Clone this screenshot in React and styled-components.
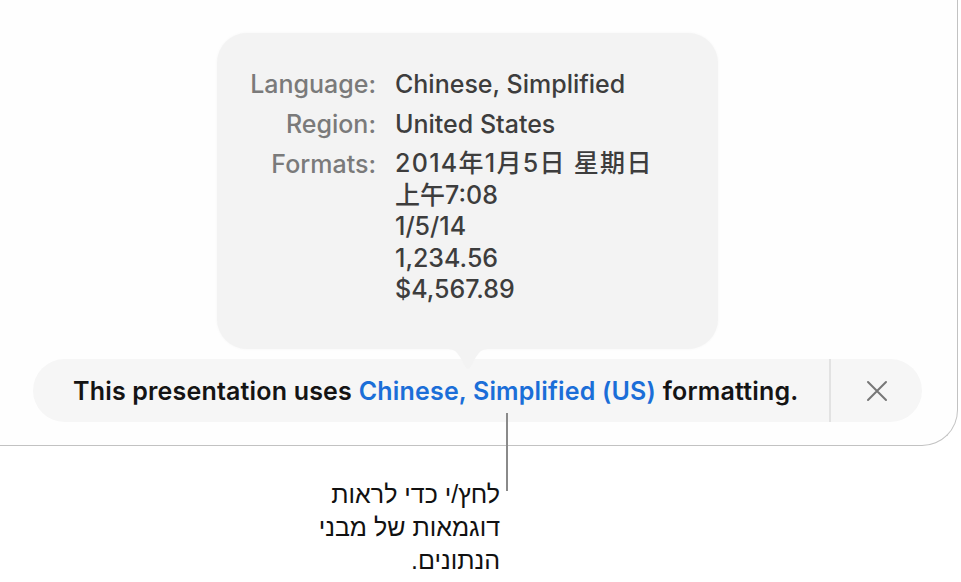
import React from "react";
import styled, { createGlobalStyle } from "styled-components";

const Global = createGlobalStyle`
  html, body { margin: 0; padding: 0; background: #ffffff; }
  body { font-family: Inter, "Noto Sans CJK SC", sans-serif; -webkit-font-smoothing: antialiased; }
  #root { width: 961px; height: 582px; overflow: hidden; }
`;

const Page = styled.div`
  position: relative;
  width: 961px;
  height: 582px;
  background: #ffffff;
`;

const Window = styled.div`
  box-sizing: border-box;
  width: 958px;
  height: 446px;
  background: #fefefe;
  border-right: 1.5px solid #c2c2c2;
  border-bottom: 1.5px solid #c2c2c2;
  border-bottom-right-radius: 36px;
  padding-top: 33px;
  display: flex;
  flex-direction: column;
`;

const Popover = styled.div`
  position: relative;
  box-sizing: border-box;
  margin-left: 217px;
  width: 501px;
  height: 316px;
  padding-top: 35px;
  background: #f3f3f3;
  border-radius: 30px;
  box-shadow: 0 0 3px rgba(0, 0, 0, 0.04);
`;

const Arrow = styled.div`
  position: absolute;
  left: 50%;
  bottom: -22px;
  width: 44px;
  height: 22px;
  transform: translateX(-50%);
  svg { display: block; }
`;

const InfoGrid = styled.div`
  display: grid;
  grid-template-columns: 159px 1fr;
  column-gap: 19px;
  row-gap: 8px;
  font-size: 25px;
  line-height: 32px;
`;

const Label = styled.div`
  text-align: right;
  color: #7a7a7a;
  font-weight: 500;
`;

const Value = styled.div`
  color: #3d3d3d;
  font-weight: 500;
  white-space: nowrap;
`;

const Line = styled.div`
  line-height: 31.5px;
  letter-spacing: ${(p) => (p.$wide ? "1.3px" : "0")};
`;

const Bar = styled.div`
  box-sizing: border-box;
  margin-top: 10px;
  margin-left: 33px;
  width: 889px;
  height: 63px;
  border-radius: 32px;
  background: #f6f6f6;
  display: flex;
  align-items: stretch;
`;

const Message = styled.div`
  flex: 1;
  display: flex;
  align-items: center;
  padding-left: 40px;
  font-size: 25px;
  font-weight: 600;
  letter-spacing: 0.18px;
  color: #141414;
  white-space: nowrap;
`;

const Link = styled.span`
  color: #1b6ed8;
  margin: 0 0.27em;
`;

const Divider = styled.div`
  width: 2px;
  background: #e2e2e2;
`;

const Close = styled.button`
  width: 91px;
  border: none;
  background: transparent;
  padding: 0;
  display: flex;
  align-items: center;
  justify-content: center;
  svg { display: block; }
`;

const Callout = styled.div`
  position: absolute;
  left: 506px;
  top: 413px;
  width: 2px;
  height: 78px;
  background: #8a8a8a;
`;

const Note = styled.div`
  position: absolute;
  right: 461px;
  top: 478px;
  direction: rtl;
  text-align: right;
  font-family: "Liberation Sans", "DejaVu Sans", sans-serif;
  font-size: 25px;
  line-height: 33px;
  color: #111;
  width: 240px;
`;

export default function App() {
  return (
    <Page>
      <Global />
      <Window>
        <Popover>
          <InfoGrid>
            <Label>Language:</Label>
            <Value>Chinese, Simplified</Value>
            <Label>Region:</Label>
            <Value>United States</Value>
            <Label>Formats:</Label>
            <Value>
              <Line $wide>2014年1月5日 星期日</Line>
              <Line>上午7:08</Line>
              <Line>1/5/14</Line>
              <Line>1,234.56</Line>
              <Line>$4,567.89</Line>
            </Value>
          </InfoGrid>
          <Arrow>
            <svg width="44" height="22" viewBox="0 0 44 22">
              <path d="M0 0 C8 0 10 2 14 8 L19 17 C21 20.5 23 20.5 25 17 L30 8 C34 2 36 0 44 0 Z" fill="#f3f3f3" />
            </svg>
          </Arrow>
        </Popover>
        <Bar>
          <Message>
            This presentation uses<Link>Chinese, Simplified (US)</Link>formatting.
          </Message>
          <Divider />
          <Close aria-label="Close">
            <svg width="22" height="22" viewBox="0 0 22 22">
              <path d="M2 2 L20 20 M20 2 L2 20" stroke="#777" strokeWidth="2" strokeLinecap="round" />
            </svg>
          </Close>
        </Bar>
      </Window>
      <Callout />
      <Note>
        לחץ/י כדי לראות
        <br />
        דוגמאות של מבני
        <br />
        הנתונים.
      </Note>
    </Page>
  );
}
